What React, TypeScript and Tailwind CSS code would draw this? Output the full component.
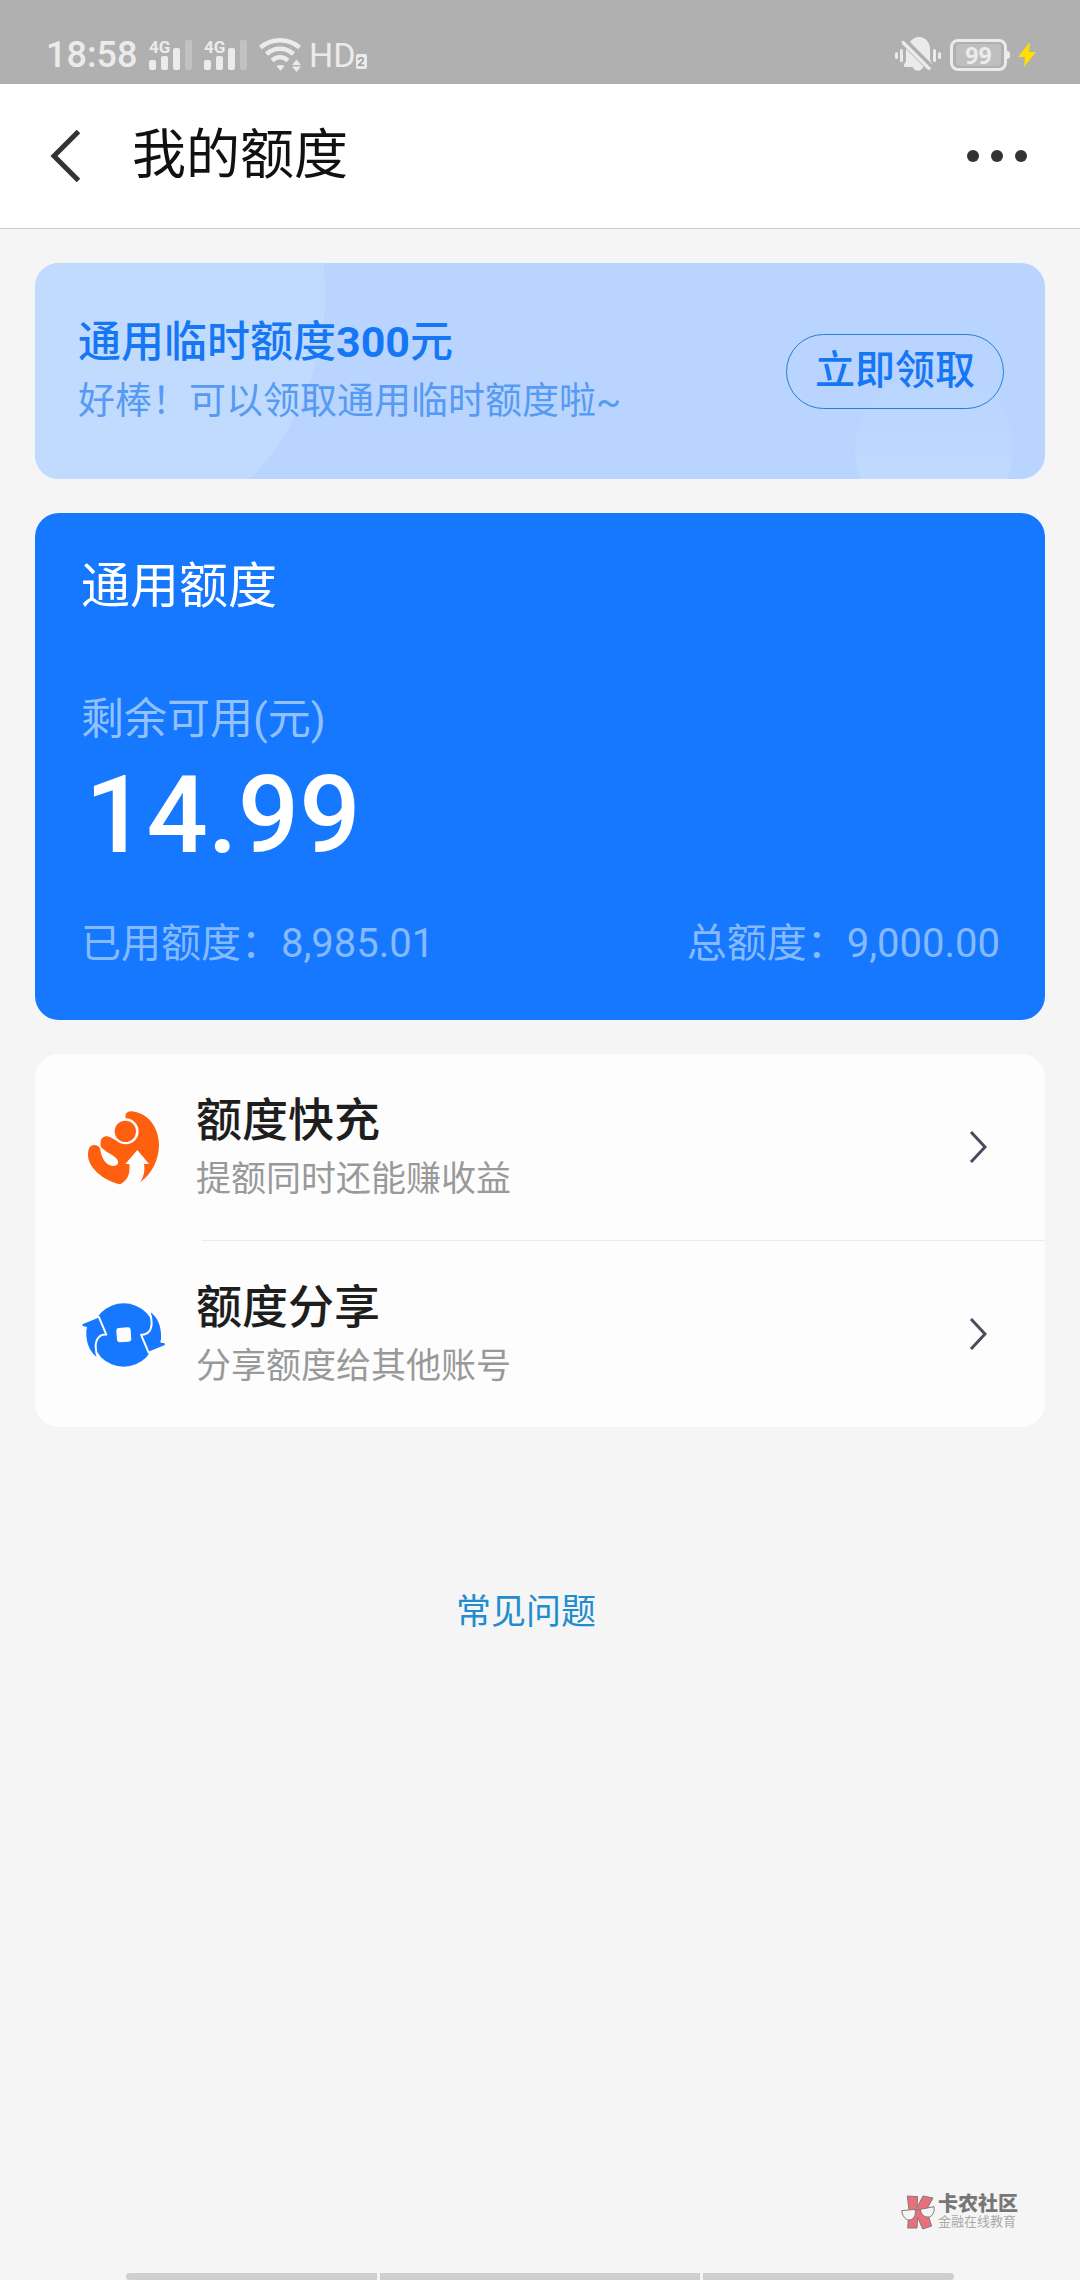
import type { ReactNode } from 'react'

function Signal() {
  return (
    <span className="relative block h-8 w-11">
      <span className="absolute left-0 top-0 text-[17px] font-bold leading-4">4G</span>
      <svg viewBox="0 0 44 32" className="h-8 w-11" fill="currentColor">
        <rect x="0" y="21" width="7" height="10" rx="2" />
        <rect x="12" y="17" width="7" height="14" rx="2" />
        <rect x="24" y="9" width="7" height="22" rx="2" />
        <rect x="36" y="1" width="7" height="30" rx="2" opacity="0.3" />
      </svg>
    </span>
  )
}

function Wifi() {
  return (
    <svg viewBox="0 0 42 34" className="h-[34px] w-[42px]" fill="none" stroke="currentColor" strokeWidth="4.5">
      <path d="M1.500 9.500C12.500 -.2 29.500 -.2 40.500 9.500" />
      <path d="M7.500 16C15.500 9 26.500 9 34.500 16" />
      <path d="M13 22.500C18 18 24 18 29 22.500" />
      <path d="M17.500 28C20 26.500 23 26.500 25.500 28L21.500 33Z" fill="currentColor" stroke="none" />
      <path d="M37.500 21.500L42 27H33ZM33 28.500H42L37.500 34Z" fill="currentColor" stroke="none" />
    </svg>
  )
}

function MutedBell() {
  return (
    <svg viewBox="0 0 46 36" className="h-9 w-[46px]" fill="currentColor">
      <rect x="0" y="15" width="3" height="7" rx="1.500" />
      <rect x="5" y="12" width="3" height="13" rx="1.500" />
      <rect x="38" y="12" width="3" height="13" rx="1.500" />
      <rect x="43" y="15" width="3" height="7" rx="1.500" />
      <path d="M15 5C17 2 20 0 24 0C31 0 35 6 35 12V21C35 24 37 26 38 28L15 5Z" />
      <path d="M9 4L36 31C36 32 35 33 33 33L7 7C6 5 7 3 9 4Z" />
      <path d="M11 12L29 30H28C27 35 19 35 18 30H10C8 29 9 27 10 26C11 25 11 23 11 21Z" />
    </svg>
  )
}

function StatusBar() {
  return (
    <div className="flex h-[84px] items-center justify-between bg-[#b0b0b0] pl-[46px] pr-11 pt-[26px] text-[#ebebeb]">
      <div className="flex items-center">
        <span className="w-[103px] text-[36px] font-medium leading-10">18:58</span>
        <div className="flex gap-[11px]">
          <Signal />
          <Signal />
        </div>
        <div className="ml-[11px] mr-2 flex">
          <Wifi />
        </div>
        <span className="text-[34px] leading-10">HD</span>
        <span className="mt-3 h-[15px] w-[11px] rounded-[2px] bg-[#ebebeb] text-center text-[13px] font-bold leading-[15px] text-[#a0a0a0]">
          2
        </span>
      </div>
      <div className="flex items-center">
        <MutedBell />
        <div className="ml-[9px] flex h-8 w-[57px] items-center justify-center rounded-lg border-[3px] border-current">
          <span className="flex h-[22px] w-[45px] items-center justify-center rounded-[4px] bg-[#bfbfbf] font-['Noto_Sans',sans-serif] text-[23px] font-bold leading-6">
            99
          </span>
        </div>
        <span className="h-2 w-[3px] rounded-r bg-[#ebebeb]" />
        <svg viewBox="0 0 18 24" className="ml-2 h-6 w-[18px]" fill="#ffde00">
          <path d="M11 0L0 14H7L6 24L18 9H11L12 0Z" />
        </svg>
      </div>
    </div>
  )
}

function FastChargeIcon() {
  return (
    <svg viewBox="0 6 330 330" className="size-[110px]" fill="#ff6010">
      <path d="M185 64C235 68 267 115 267 165C267 210 243 255 212 275L150 283C95 270 54 230 54 195C54 172 62 166 72 165C82 165 87 169 91 177L92 158C92 145 100 138 112 139C122 140 130 148 140 152L168 85C163 75 170 62 185 64Z" />
      <circle cx="167" cy="124" r="39" fill="#fdfdfd" />
      <circle cx="166" cy="124" r="32" />
      <path
        d="M89 164C98 184 128 192 138 204C150 216 144 228 130 228C108 226 92 206 89 164Z"
        fill="#fdfdfd"
      />
      <path
        d="M202 180L237 222H222C226 245 220 262 210 277L208 300L150 290L151 283C178 268 180 245 178 222H166Z"
        fill="#fdfdfd"
      />
    </svg>
  )
}

function ShareIcon() {
  const wing =
    'M36 130L86 110L109 164C90 162 77 176 77 200C77 215 81 227 85 238C56 220 44 190 46 150L48 143L37 141C34 138 34 132 36 130Z'
  return (
    <svg viewBox="0 -3 330 330" className="size-[110px]" fill="#1677ff">
      <circle cx="161" cy="165" r="95" />
      <g stroke="#fdfdfd" strokeWidth="6" strokeLinejoin="round">
        <path d={wing} />
        <path d={wing} transform="rotate(180 161 164)" />
      </g>
      <rect x="140" y="143" width="43" height="43" rx="8" fill="#fdfdfd" transform="rotate(-4 161 165)" />
    </svg>
  )
}

function WatermarkLogo() {
  return (
    <svg viewBox="60 36 102 108" className="h-9 w-[34px]" stroke="#85787a" strokeWidth="3" strokeLinejoin="round">
      <path d="M79 42L110 44L108 76L126 42L156 48L136 84L152 132L125 141L110 106L108 138H80L84 84Z" fill="#e8707a" />
      <path d="M62 86L102 82C106 100 98 114 84 114C72 114 64 100 62 86Z" fill="#f5f5f5" />
      <path d="M118 82L159 74C161 92 154 104 142 105C128 106 120 96 118 82Z" fill="#f5f5f5" />
      <path d="M102 84L118 82" />
    </svg>
  )
}

type Entry = {
  title: string
  desc: string
  icon: ReactNode
}

const entries: Entry[] = [
  { title: '额度快充', desc: '提额同时还能赚收益', icon: <FastChargeIcon /> },
  { title: '额度分享', desc: '分享额度给其他账号', icon: <ShareIcon /> }
]

export default function App() {
  return (
    <div className="flex min-h-screen flex-col bg-[#f5f5f5] font-['Roboto','Noto_Sans_CJK_SC',sans-serif]">
      <StatusBar />

      <header className="flex h-[145px] items-center border-b border-[#c8c8c8] bg-white pl-[50px] pr-[53px]">
        <button type="button" aria-label="返回" className="mr-[52px]">
          <svg viewBox="0 0 30 52" className="h-[52px] w-[30px]" fill="none" stroke="#333" strokeWidth="5">
            <path d="M28.500 1.500L4 26L28.500 50.500" />
          </svg>
        </button>
        <h1 className="flex-1 text-[54px] leading-[60px] text-[#111]">我的额度</h1>
        <button type="button" aria-label="更多" className="flex gap-3">
          <span className="size-3 rounded-full bg-[#333]" />
          <span className="size-3 rounded-full bg-[#333]" />
          <span className="size-3 rounded-full bg-[#333]" />
        </button>
      </header>

      <main className="flex flex-col gap-[34px] px-[35px] pt-[34px]">
        <section className="relative flex items-center justify-between overflow-hidden rounded-3xl bg-[#b9d5ff] py-[47px] pl-[43px] pr-[41px]">
          <span className="absolute -left-[246px] -top-[238px] size-[536px] rounded-full bg-[#c1dbff]" />
          <span className="absolute right-8 top-[108px] size-[158px] rounded-full bg-linear-to-b from-[#b9d5ff] to-[#c2dbff]" />
          <div className="relative pt-0.5">
            <h2 className="text-[43px] font-medium leading-[60px] text-[#1677f5]">
              通用临时额度<span className="font-bold">300</span>元
            </h2>
            <p className="text-[37px] leading-[60px] text-[#559af3]">好棒！可以领取通用临时额度啦~</p>
          </div>
          <button
            type="button"
            className="relative h-[75px] w-[218px] rounded-full border border-[#2a7bd2] text-[40px] font-medium leading-[60px] text-[#1677f5]"
          >
            立即领取
          </button>
        </section>

        <section className="rounded-3xl bg-[#1677ff] pb-[46px] pl-[46px] pr-[45px] pt-11 text-white">
          <h2 className="text-[49px] leading-[60px]">通用额度</h2>
          <p className="mt-[72px] text-[43px] leading-[60px] text-[#92c1ff]">剩余可用(元)</p>
          <p className="pl-1 text-[108px] font-medium leading-[132px]">14.99</p>
          <div className="mt-[33px] flex justify-between text-[40px] leading-[60px] text-[#86baff]">
            <p>已用额度：8,985.01</p>
            <p>总额度：9,000.00</p>
          </div>
        </section>

        <ul className="rounded-3xl bg-[#fdfdfd]">
          {entries.map((entry, i) => (
            <li key={entry.title}>
              {i > 0 && <hr className="ml-[167px] border-[#ececec]" />}
              <a href="#" className="flex items-center pl-[35px] pr-[58px]">
                {entry.icon}
                <div className="ml-4 flex-1 pb-[30px] pt-9">
                  <h3 className="text-[46px] font-medium leading-[60px] text-[#1e1e1e]">{entry.title}</h3>
                  <p className="text-[35px] leading-[60px] text-[#999]">{entry.desc}</p>
                </div>
                <svg viewBox="0 0 18 34" className="h-[34px] w-[18px]" fill="none" stroke="#4a4a5e" strokeWidth="3">
                  <path d="M2 2L16 17L2 32" />
                </svg>
              </a>
            </li>
          ))}
        </ul>
      </main>

      <div className="mt-[156px] pr-7 text-center">
        <a href="#" className="text-[35px] leading-[60px] text-[#1f8dcf]">
          常见问题
        </a>
      </div>

      <footer className="mt-auto">
        <div className="flex items-center justify-end gap-[3px] pr-[62px]">
          <WatermarkLogo />
          <div className="text-[#777]">
            <p className="text-[20px] font-black leading-5">卡农社区</p>
            <p className="text-[13px] leading-4 text-[#aaa]">金融在线教育</p>
          </div>
        </div>
        <div className="mt-[43px] flex h-[7px] gap-[3px] px-[126px]">
          <span className="w-[251px] rounded-l-full bg-[#d0d0d0]" />
          <span className="flex-1 bg-[#d0d0d0]" />
          <span className="w-[251px] rounded-r-full bg-[#d0d0d0]" />
        </div>
      </footer>
    </div>
  )
}
